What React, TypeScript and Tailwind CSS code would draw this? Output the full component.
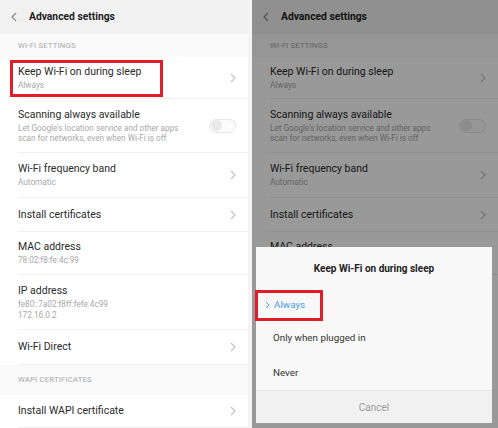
import React from "react";

type Row = {
  title: string;
  sub?: string[];
  h: string;
  chevron?: boolean;
  toggle?: boolean;
  extra?: string;
};

const wifiRows: Row[] = [
  { title: "Keep Wi-Fi on during sleep", sub: ["Always"], h: "h-[42px]", chevron: true },
  {
    title: "Scanning always available",
    sub: ["Let Google's location service and other apps", "scan for networks, even when Wi-Fi is off"],
    h: "h-[54px]",
    toggle: true,
  },
  { title: "Wi-Fi frequency band", sub: ["Automatic"], h: "h-[45px]", chevron: true },
  { title: "Install certificates", h: "h-[34px]", chevron: true },
  { title: "MAC address", sub: ["78:02:f8:fe:4c:99"], h: "h-[43px]" },
  { title: "IP address", sub: ["fe80::7a02:f8ff:fefe:4c99", "172.16.0.2"], h: "h-[55px]" },
  { title: "Wi-Fi Direct", h: "h-[35px]", chevron: true },
];

function Chevron() {
  return (
    <svg width="6" height="10" viewBox="0 0 6 10" className="shrink-0">
      <path d="M1 1l4 4-4 4" fill="none" stroke="#c4c4c4" strokeWidth="1.2" />
    </svg>
  );
}

function Toggle() {
  return (
    <div className="w-[27px] h-[14px] rounded-full border border-[#e6e6e6] bg-[#fbfbfb] flex items-center px-[1px] shrink-0">
      <div className="w-[11px] h-[11px] rounded-full bg-[#e9e9e9]" />
    </div>
  );
}

function SettingRow({ row }: { row: Row }) {
  return (
    <div className={`${row.h} pl-[18px] flex shrink-0`}>
      <div className={`flex-1 flex items-center pr-[12px] border-b border-[#f0f0f0] ${row.extra ?? ""}`}>
        <div className="flex-1">
          <div className="text-[10.5px] leading-[14px] text-[#2a2a2a]">{row.title}</div>
          {row.sub && (
            <div className="mt-[1px] text-[8.2px] leading-[10.5px] text-[#a8a8a8]">
              {row.sub.map((s) => (
                <div key={s}>{s}</div>
              ))}
            </div>
          )}
        </div>
        {row.chevron && <Chevron />}
        {row.toggle && <Toggle />}
      </div>
    </div>
  );
}

function SectionHeader({ label, h }: { label: string; h: string }) {
  return (
    <div className={`${h} shrink-0 pl-[18px] flex items-center bg-[#fafafa] text-[7.7px] tracking-[0.2px] text-[#a8a8a8]`}>
      {label}
    </div>
  );
}

function Header() {
  return (
    <div className="h-[34px] bg-[#f1f1f1] flex items-center pl-[11px] gap-[12px] shrink-0">
      <svg width="6" height="10" viewBox="0 0 6 10">
        <path d="M5 1L1 5l4 4" fill="none" stroke="#8a8a8a" strokeWidth="1.2" />
      </svg>
      <span className="text-[10.3px] font-bold text-[#222]">Advanced settings</span>
    </div>
  );
}

function SettingsScreen() {
  return (
    <div className="flex flex-col bg-white h-full">
      <Header />
      <SectionHeader label="WI-FI SETTINGS" h="h-[23px]" />
      {wifiRows.map((r) => (
        <SettingRow key={r.title} row={r} />
      ))}
      <SectionHeader label="WAPI CERTIFICATES" h="h-[30px]" />
      <SettingRow row={{ title: "Install WAPI certificate", h: "h-[33px]", chevron: true }} />
    </div>
  );
}

// same screen behind the dialog; rows under the sheet are hidden by it anyway
function DimmedScreen() {
  return (
    <div className="flex flex-col bg-white h-full">
      <Header />
      <SectionHeader label="WI-FI SETTINGS" h="h-[23px]" />
      {wifiRows.slice(0, 4).map((r) => (
        <SettingRow key={r.title} row={r} />
      ))}
      <SettingRow row={{ title: "MAC address", h: "h-[43px]", extra: "pb-[12px]" }} />
    </div>
  );
}

export default function App() {
  return (
    <div
      className="w-[498px] h-[428px] flex bg-white overflow-hidden"
      style={{ fontFamily: "Roboto, 'Liberation Sans', sans-serif" }}
    >
      <div className="relative w-[248px] h-full overflow-hidden">
        <SettingsScreen />
        <div className="absolute left-[10px] top-[60px] w-[153px] h-[37px] border-[3px] border-[#e11d2a]" />
      </div>
      <div className="w-[4px] bg-[#f4f4f4]" />
      <div className="relative w-[246px] h-full overflow-hidden bg-white">
        <DimmedScreen />
        <div className="absolute inset-0 bg-black/40" />
        <div className="absolute left-[4px] top-[247px] w-[236px] h-[176px] bg-[#f8f8f8] flex flex-col">
          <div className="h-[43px] flex items-center justify-center text-[10px] font-bold text-[#222]">
            Keep Wi-Fi on during sleep
          </div>
          <div className="h-[30px] flex items-center pl-[9px] gap-[4px] text-[9.8px] text-[#4a9ae4]">
            <svg width="5" height="8" viewBox="0 0 5 8">
              <path d="M1 1l3 3-3 3" fill="none" stroke="#4a9ae4" strokeWidth="1" />
            </svg>
            <span>Always</span>
          </div>
          <div className="h-[35px] flex items-center pl-[17px] pt-[2px] text-[9.8px] text-[#333]">Only when plugged in</div>
          <div className="h-[35px] flex items-center pl-[17px] pt-[2px] text-[9.8px] text-[#333]">Never</div>
          <div className="flex-1 flex items-center justify-center bg-[#f1f1f1] border-t border-[#e8e8e8] text-[10px] text-[#9a9a9a]">
            Cancel
          </div>
        </div>
        <div className="absolute left-[3px] top-[290px] w-[68px] h-[31px] border-[3px] border-[#e11d2a]" />
      </div>
    </div>
  );
}
